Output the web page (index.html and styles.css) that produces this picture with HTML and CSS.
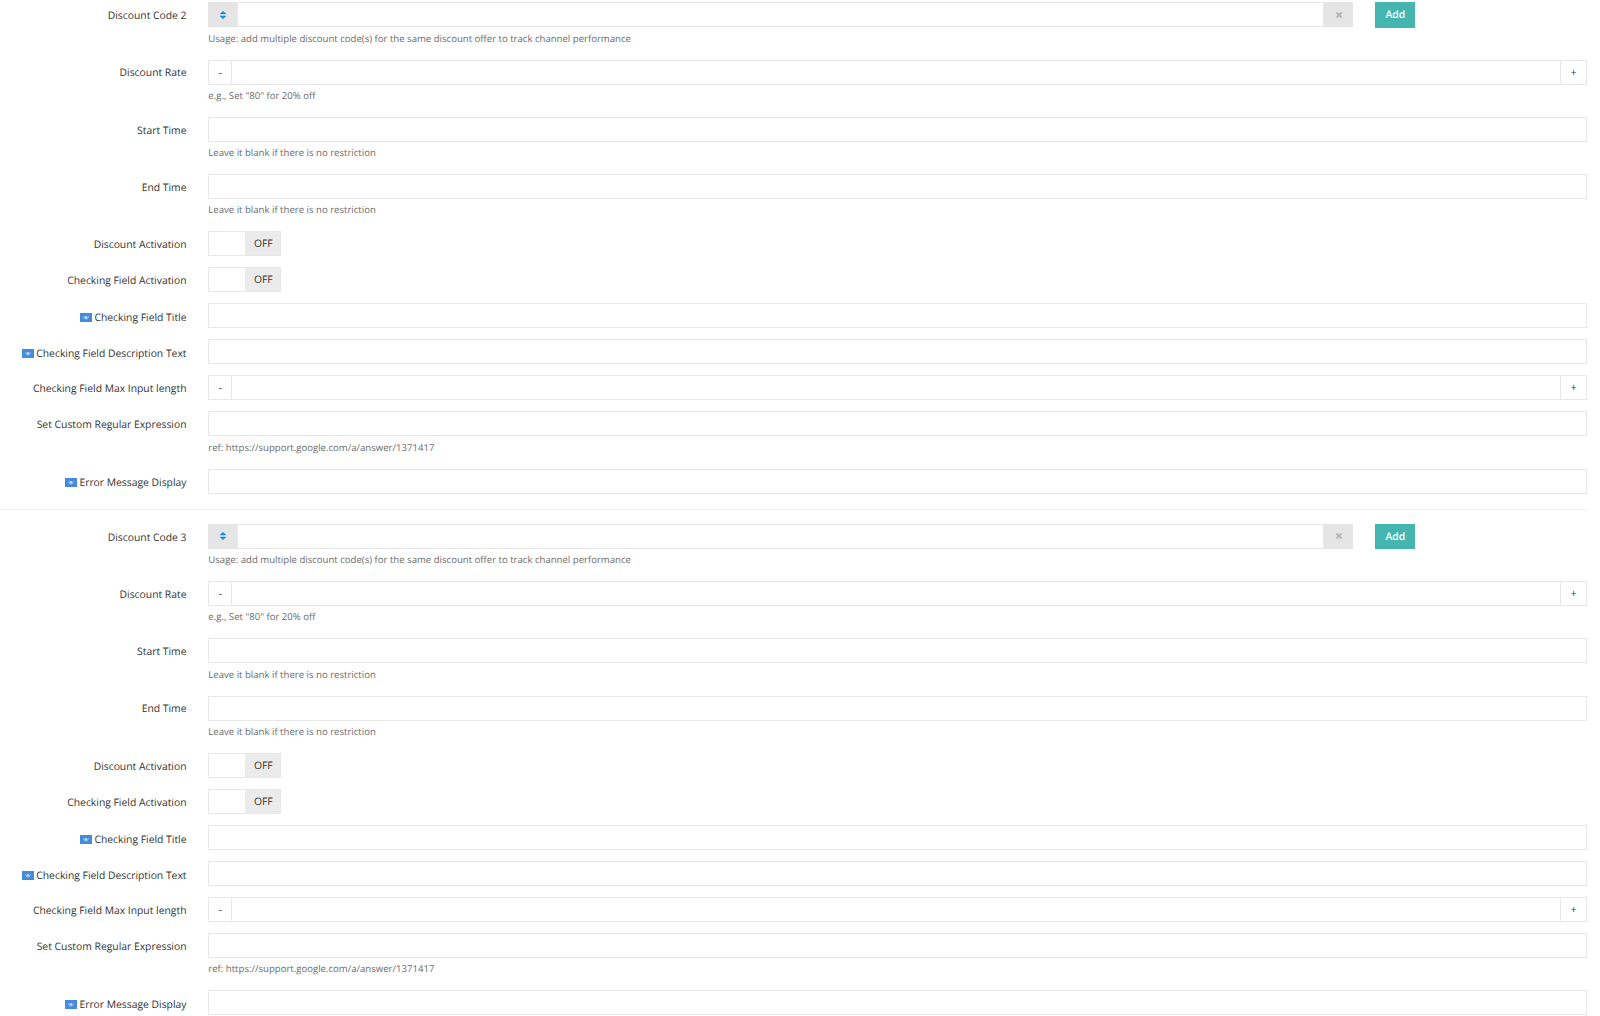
FILE: index.html
```html
<!DOCTYPE html>
<html lang="en">
<head>
<meta charset="UTF-8">
<meta name="viewport" content="width=device-width,initial-scale=1">
<title>Discount Codes</title>
<link rel="stylesheet" href="styles.css">
</head>
<body>
    <!-- shared icons -->
    <svg class="sprite" width="0" height="0">
        <symbol id="sort" viewBox="0 0 6 8"><path d="M3 0L5.9 2.6V3.2H.1V2.6zM3 8L5.9 5.4V4.8H.1V5.4z"/></symbol>
        <symbol id="times" viewBox="0 0 8 8"><path d="M1.4 1.6L6.6 6.4M6.6 1.6L1.4 6.4"/></symbol>
        <symbol id="flag" viewBox="0 0 12 9">
            <rect width="12" height="9" fill="#428cdb"/>
            <path d="M3.7 3.2C3.6 5 4.6 6 6 6S8.4 5 8.3 3.2" fill="none" stroke="#c5ddf5" stroke-width=".7"/>
            <circle cx="6" cy="4.3" r="1.2" fill="#c5ddf5"/>
        </symbol>
    </svg>

    <form class="form">
        <!-- Discount 2 -->
        <section class="discount">
            <div class="row has-help">
                <label>Discount Code 2</label>
                <div class="field">
                    <div class="code-line">
                        <div class="group code">
                            <span class="addon"><svg class="sort"><use href="#sort"/></svg></span>
                            <input type="text">
                            <span class="addon"><svg class="times"><use href="#times"/></svg></span>
                        </div>
                        <button type="button" class="add">Add</button>
                    </div>
                    <p>Usage: add multiple discount code(s) for the same discount offer to track channel performance</p>
                </div>
            </div>
            <div class="row has-help">
                <label>Discount Rate</label>
                <div class="field">
                    <div class="group spinner"><button type="button">-</button><input type="text"><button type="button">+</button></div>
                    <p>e.g., Set "80" for 20% off</p>
                </div>
            </div>
            <div class="row has-help">
                <label>Start Time</label>
                <div class="field">
                    <input type="text">
                    <p>Leave it blank if there is no restriction</p>
                </div>
            </div>
            <div class="row has-help">
                <label>End Time</label>
                <div class="field">
                    <input type="text">
                    <p>Leave it blank if there is no restriction</p>
                </div>
            </div>
            <div class="row">
                <label>Discount Activation</label>
                <div class="field"><div class="switch"><span>OFF</span></div></div>
            </div>
            <div class="row">
                <label>Checking Field Activation</label>
                <div class="field"><div class="switch"><span>OFF</span></div></div>
            </div>
            <div class="row">
                <label class="lang"><svg class="flag"><use href="#flag"/></svg>Checking Field Title</label>
                <div class="field"><input type="text"></div>
            </div>
            <div class="row">
                <label class="lang"><svg class="flag"><use href="#flag"/></svg>Checking Field Description Text</label>
                <div class="field"><input type="text"></div>
            </div>
            <div class="row">
                <label>Checking Field Max Input length</label>
                <div class="field">
                    <div class="group spinner"><button type="button">-</button><input type="text"><button type="button">+</button></div>
                </div>
            </div>
            <div class="row has-help">
                <label>Set Custom Regular Expression</label>
                <div class="field">
                    <input type="text">
                    <p>ref: https://support.google.com/a/answer/1371417</p>
                </div>
            </div>
            <div class="row">
                <label class="lang"><svg class="flag"><use href="#flag"/></svg>Error Message Display</label>
                <div class="field"><input type="text"></div>
            </div>
        </section>

        <!-- Discount 3 -->
        <section class="discount">
            <div class="row has-help">
                <label>Discount Code 3</label>
                <div class="field">
                    <div class="code-line">
                        <div class="group code">
                            <span class="addon"><svg class="sort"><use href="#sort"/></svg></span>
                            <input type="text">
                            <span class="addon"><svg class="times"><use href="#times"/></svg></span>
                        </div>
                        <button type="button" class="add">Add</button>
                    </div>
                    <p>Usage: add multiple discount code(s) for the same discount offer to track channel performance</p>
                </div>
            </div>
            <div class="row has-help">
                <label>Discount Rate</label>
                <div class="field">
                    <div class="group spinner"><button type="button">-</button><input type="text"><button type="button">+</button></div>
                    <p>e.g., Set "80" for 20% off</p>
                </div>
            </div>
            <div class="row has-help">
                <label>Start Time</label>
                <div class="field">
                    <input type="text">
                    <p>Leave it blank if there is no restriction</p>
                </div>
            </div>
            <div class="row has-help">
                <label>End Time</label>
                <div class="field">
                    <input type="text">
                    <p>Leave it blank if there is no restriction</p>
                </div>
            </div>
            <div class="row">
                <label>Discount Activation</label>
                <div class="field"><div class="switch"><span>OFF</span></div></div>
            </div>
            <div class="row">
                <label>Checking Field Activation</label>
                <div class="field"><div class="switch"><span>OFF</span></div></div>
            </div>
            <div class="row">
                <label class="lang"><svg class="flag"><use href="#flag"/></svg>Checking Field Title</label>
                <div class="field"><input type="text"></div>
            </div>
            <div class="row">
                <label class="lang"><svg class="flag"><use href="#flag"/></svg>Checking Field Description Text</label>
                <div class="field"><input type="text"></div>
            </div>
            <div class="row">
                <label>Checking Field Max Input length</label>
                <div class="field">
                    <div class="group spinner"><button type="button">-</button><input type="text"><button type="button">+</button></div>
                </div>
            </div>
            <div class="row has-help">
                <label>Set Custom Regular Expression</label>
                <div class="field">
                    <input type="text">
                    <p>ref: https://support.google.com/a/answer/1371417</p>
                </div>
            </div>
            <div class="row">
                <label class="lang"><svg class="flag"><use href="#flag"/></svg>Error Message Display</label>
                <div class="field"><input type="text"></div>
            </div>
        </section>
    </form>
</body>
</html>
```

FILE: styles.css
```css
:root{
    --line:#e8e8e8;
    --addon:#e5e5e5;
    --text:#333;
    --help:#6c6c6c;
    --accent:#45b6af;
}

*{margin:0;padding:0;box-sizing:border-box}
body{
    height:100vh;
    overflow:hidden;
    background:#fff;
    color:var(--text);
    font-family:"Open Sans",sans-serif;
    font-size:10.35px;
    text-rendering:geometricPrecision;
}
.sprite{display:block}

.form{
    width:1587px;
    padding-top:2.4px;
}
.discount{height:521.6px}
.discount + .discount{position:relative}
.discount + .discount::before{
    content:'';
    position:absolute;
    top:-15px;
    left:0;
    right:0;
    height:1px;
    background:#f0f0f0;
}

/* rows */
.row{
    display:flex;
    height:36.05px;
}
.row.has-help{height:57.2px}
.row label{
    width:208.3px;
    padding-top:.8px;
    padding-right:21.8px;
    line-height:27.6px;
    text-align:right;
    white-space:nowrap;
}
.row label.lang{padding-top:1.8px}
.field{flex:1}
.field p{
    margin-top:4.2px;
    color:var(--help);
    font-size:9.58px;
    line-height:14px;
}

/* inputs */
input{
    display:block;
    width:100%;
    height:25px;
    border:1px solid var(--line);
    background:#fff;
    outline:0;
}
.group{
    display:flex;
    height:25px;
}
.group input{flex:1;min-width:0}
.code-line{
    display:flex;
    gap:22px;
    height:25px;
}
.code{width:1145px}
.addon{
    display:flex;
    align-items:center;
    justify-content:center;
    width:29px;
    background:var(--addon);
}
.sort{width:6px;height:8px;fill:#1c8fdc}
.times{width:8px;height:8px;stroke:#b5b5b5;stroke-width:2}
.add{
    width:40px;
    height:25.5px;
    border:0;
    background:var(--accent);
    color:#fff;
    font:600 10.35px "Open Sans",sans-serif;
    text-rendering:inherit;
}
.spinner button{
    width:23px;
    padding-bottom:1px;
    border:1px solid var(--line);
    border-right:0;
    background:#fff;
    color:var(--text);
    font:10px "Open Sans",sans-serif;
}
.spinner button:last-child{
    width:27px;
    border-right:1px solid var(--line);
}
.spinner input{border-right:0}

/* switch */
.switch{
    display:flex;
    justify-content:flex-end;
    width:73px;
    height:25px;
    border:1px solid var(--line);
}
.switch span{
    width:35px;
    padding-left:1px;
    background:#ebebeb;
    line-height:24.6px;
    text-align:center;
}

.flag{
    width:12px;
    height:9px;
    margin-right:2.6px;
    vertical-align:-1px;
}
```
